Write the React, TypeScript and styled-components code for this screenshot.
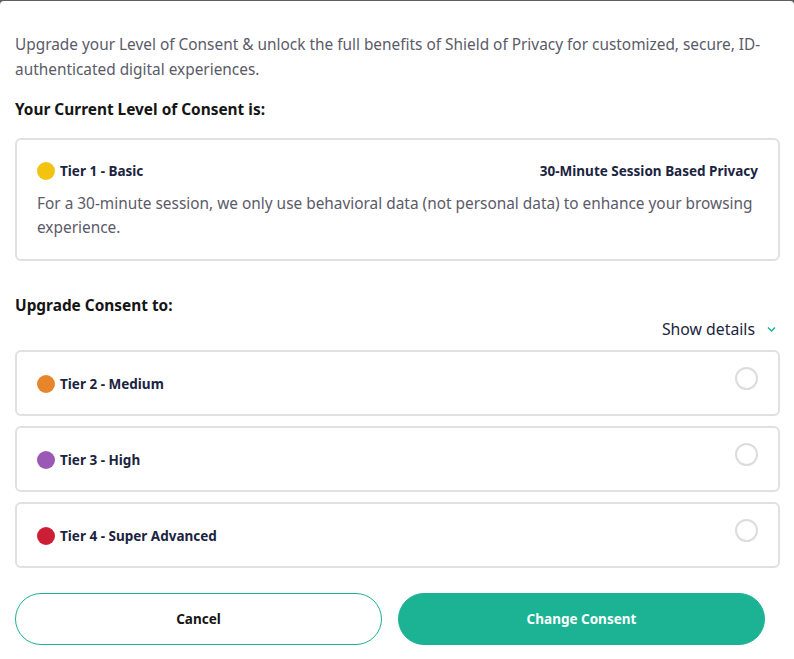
import React from "react";
import styled, { createGlobalStyle } from "styled-components";

const Global = createGlobalStyle`
  html, body { margin: 0; padding: 0; background: #5f5f5f; }
  body { font-family: "Noto Sans", "Open Sans", sans-serif; }
  * { box-sizing: border-box; }
`;

const Modal = styled.div`
  margin-top: 1px;
  width: 794px;
  height: 658px;
  background: #fff;
  border-radius: 4px 4px 0 0;
  padding: 31px 14px 0 15px;
  display: flex;
  flex-direction: column;
  overflow: hidden;
`;

const Intro = styled.p`
  margin: 0;
  font-size: 15.4px;
  line-height: 25px;
  color: #5a5a68;
`;

const SectionTitle = styled.h3<{ $gap: number }>`
  margin: ${(p) => p.$gap}px 0 0 0;
  font-size: 15.4px;
  line-height: 22px;
  font-weight: 700;
  color: #151515;
`;

const Card = styled.div<{ $tall?: boolean }>`
  border: 2px solid #e0e0e0;
  border-radius: 6px;
  padding: ${(p) => (p.$tall ? "22px 20px 20px 20px" : "1px 20px 0 20px")};
  height: ${(p) => (p.$tall ? "123px" : "66px")};
  margin-top: ${(p) => (p.$tall ? "17px" : "0")};
  display: flex;
  flex-direction: column;
  justify-content: ${(p) => (p.$tall ? "flex-start" : "center")};
`;

const Row = styled.div`
  display: flex;
  align-items: center;
  justify-content: space-between;
`;

const TierName = styled.div`
  display: flex;
  align-items: center;
  gap: 5px;
  font-size: 13.5px;
  font-weight: 700;
  color: #1b2440;
`;

const Dot = styled.span<{ $color: string }>`
  width: 18px;
  height: 18px;
  border-radius: 50%;
  background: ${(p) => p.$color};
  display: inline-block;
`;

const SideLabel = styled.span`
  font-size: 13.5px;
  font-weight: 700;
  color: #1b2440;
`;

const Desc = styled.p`
  margin: 12px 0 0 0;
  font-size: 15.4px;
  line-height: 24px;
  color: #5a5a68;
`;

const Radio = styled.span`
  width: 23px;
  height: 23px;
  border-radius: 50%;
  border: 2px solid #dcdcdc;
  margin-top: -11px;
`;

const DetailsRow = styled.div`
  display: flex;
  justify-content: flex-end;
  align-items: center;
  gap: 11px;
  padding-right: 3px;
  font-size: 15.8px;
  color: #1b2440;
  height: 24px;
`;

const List = styled.div`
  display: flex;
  flex-direction: column;
  gap: 10px;
  margin-top: 9px;
`;

const Buttons = styled.div`
  display: flex;
  gap: 16px;
  width: 750px;
  margin-top: 25px;
`;

const Button = styled.button<{ $primary?: boolean }>`
  flex: 1;
  height: 52px;
  border-radius: 26px;
  border: 1px solid #1bb394;
  background: ${(p) => (p.$primary ? "#1bb394" : "#fff")};
  color: ${(p) => (p.$primary ? "#fff" : "#151515")};
  font-family: "Noto Sans", sans-serif;
  font-size: 13.5px;
  font-weight: 700;
  cursor: pointer;
`;

const tiers = [
  { name: "Tier 2 - Medium", color: "#e8852a" },
  { name: "Tier 3 - High", color: "#9b59b6" },
  { name: "Tier 4 - Super Advanced", color: "#cc1f36" },
];

export default function App() {
  return (
    <>
      <Global />
      <Modal>
        <Intro>
          Upgrade your Level of Consent &amp; unlock the full benefits of Shield of Privacy for customized, secure, ID-authenticated digital experiences.
        </Intro>
        <SectionTitle $gap={17}>Your Current Level of Consent is:</SectionTitle>
        <Card $tall>
          <Row>
            <TierName>
              <Dot $color="#f2c40f" />
              Tier 1 - Basic
            </TierName>
            <SideLabel>30-Minute Session Based Privacy</SideLabel>
          </Row>
          <Desc>
            For a 30-minute session, we only use behavioral data (not personal data) to enhance your browsing experience.
          </Desc>
        </Card>
        <SectionTitle $gap={34}>Upgrade Consent to:</SectionTitle>
        <DetailsRow>
          Show details
          <svg width="11" height="8" viewBox="0 0 11 8">
            <path d="M2 2.5 L5.5 6 L9 2.5" fill="none" stroke="#1bb394" strokeWidth="1.5" />
          </svg>
        </DetailsRow>
        <List>
          {tiers.map((t) => (
            <Card key={t.name}>
              <Row>
                <TierName>
                  <Dot $color={t.color} />
                  {t.name}
                </TierName>
                <Radio />
              </Row>
            </Card>
          ))}
        </List>
        <Buttons>
          <Button>Cancel</Button>
          <Button $primary>Change Consent</Button>
        </Buttons>
      </Modal>
    </>
  );
}
